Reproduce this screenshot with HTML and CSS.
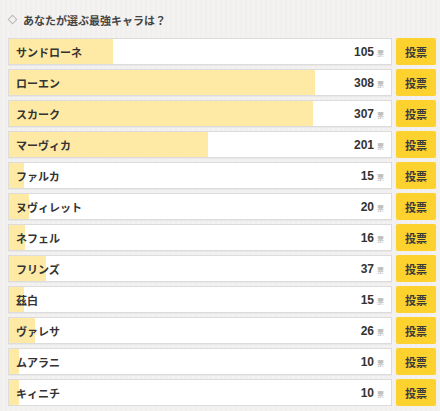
FILE: index.html
```html
<!DOCTYPE html>
<html lang="ja">
<head>
  <meta charset="UTF-8">
  <title>最強キャラ投票</title>
  <link rel="stylesheet" href="styles.css">
</head>
<body>

  <div class="poll">
    <h3 class="poll-title"><span class="diamond"></span>あなたが選ぶ最強キャラは？</h3>

    <ul class="poll-list">
      <li class="poll-item">
        <div class="poll-bar"><span class="fill" style="width: 27.3%"></span><span class="name">サンドローネ</span><span class="count">105<small>票</small></span></div>
        <button class="vote">投票</button>
      </li>
      <li class="poll-item">
        <div class="poll-bar"><span class="fill" style="width: 80%"></span><span class="name">ローエン</span><span class="count">308<small>票</small></span></div>
        <button class="vote">投票</button>
      </li>
      <li class="poll-item">
        <div class="poll-bar"><span class="fill" style="width: 79.7%"></span><span class="name">スカーク</span><span class="count">307<small>票</small></span></div>
        <button class="vote">投票</button>
      </li>
      <li class="poll-item">
        <div class="poll-bar"><span class="fill" style="width: 52.2%"></span><span class="name">マーヴィカ</span><span class="count">201<small>票</small></span></div>
        <button class="vote">投票</button>
      </li>
      <li class="poll-item">
        <div class="poll-bar"><span class="fill" style="width: 3.9%"></span><span class="name">ファルカ</span><span class="count">15<small>票</small></span></div>
        <button class="vote">投票</button>
      </li>
      <li class="poll-item">
        <div class="poll-bar"><span class="fill" style="width: 5.2%"></span><span class="name">ヌヴィレット</span><span class="count">20<small>票</small></span></div>
        <button class="vote">投票</button>
      </li>
      <li class="poll-item">
        <div class="poll-bar"><span class="fill" style="width: 4.2%"></span><span class="name">ネフェル</span><span class="count">16<small>票</small></span></div>
        <button class="vote">投票</button>
      </li>
      <li class="poll-item">
        <div class="poll-bar"><span class="fill" style="width: 9.6%"></span><span class="name">フリンズ</span><span class="count">37<small>票</small></span></div>
        <button class="vote">投票</button>
      </li>
      <li class="poll-item">
        <div class="poll-bar"><span class="fill" style="width: 3.9%"></span><span class="name">茲白</span><span class="count">15<small>票</small></span></div>
        <button class="vote">投票</button>
      </li>
      <li class="poll-item">
        <div class="poll-bar"><span class="fill" style="width: 6.8%"></span><span class="name">ヴァレサ</span><span class="count">26<small>票</small></span></div>
        <button class="vote">投票</button>
      </li>
      <li class="poll-item">
        <div class="poll-bar"><span class="fill" style="width: 2.6%"></span><span class="name">ムアラニ</span><span class="count">10<small>票</small></span></div>
        <button class="vote">投票</button>
      </li>
      <li class="poll-item">
        <div class="poll-bar"><span class="fill" style="width: 2.6%"></span><span class="name">キィニチ</span><span class="count">10<small>票</small></span></div>
        <button class="vote">投票</button>
      </li>
    </ul>
  </div>

</body>
</html>
```

FILE: styles.css
```css
body {
  margin: 0;
  padding: 0;
  background-color: #f3f2f0;
  background-image: repeating-linear-gradient(90deg, rgba(0, 0, 0, 0.012) 0 2px, transparent 2px 5px);
  font-family: "Noto Sans CJK JP", "Liberation Sans", sans-serif;
  color: #333;
}

.poll {
  padding: 0 4px 0 8px;
}

.poll-title {
  display: flex;
  align-items: center;
  gap: 7px;
  height: 38px;
  margin: 0;
  padding-top: 1px;
  box-sizing: border-box;
  font-size: 11px;
  font-weight: bold;
  color: #444;
}

.diamond {
  display: inline-block;
  width: 5px;
  height: 5px;
  margin-left: 1px;
  border: 1.5px solid #b9b9b9;
  transform: rotate(45deg);
}

.poll-list {
  list-style: none;
  margin: 0;
  padding: 0;
  display: flex;
  flex-direction: column;
  gap: 4px;
}

.poll-item {
  display: flex;
  gap: 4px;
  height: 27px;
}

.poll-bar {
  position: relative;
  flex: 1;
  display: flex;
  align-items: center;
  justify-content: space-between;
  padding: 0 7px 0 7px;
  background: #fff;
  border: 1px solid #dcdcdc;
  box-shadow: 0 1px 0 #e8e8e8;
}

.poll-bar .fill {
  position: absolute;
  left: 0;
  top: 0;
  bottom: 0;
  background: #ffeaa5;
}

.poll-bar .name,
.poll-bar .count {
  position: relative;
  font-size: 11px;
  font-weight: bold;
  color: #333;
}

.poll-bar .count {
  font-family: "Liberation Sans", Arial, sans-serif;
  font-size: 12px;
}

.poll-bar .count small {
  margin-left: 3px;
  font-family: "Noto Sans CJK JP", sans-serif;
  font-size: 7px;
  font-weight: normal;
  color: #aaa;
}

.vote {
  width: 40px;
  border: none;
  border-radius: 2px;
  background: #fdd12e;
  color: #3a3a3a;
  font-family: "Noto Sans CJK JP", sans-serif;
  font-size: 11px;
  font-weight: bold;
  padding: 0;
  cursor: pointer;
}
```
